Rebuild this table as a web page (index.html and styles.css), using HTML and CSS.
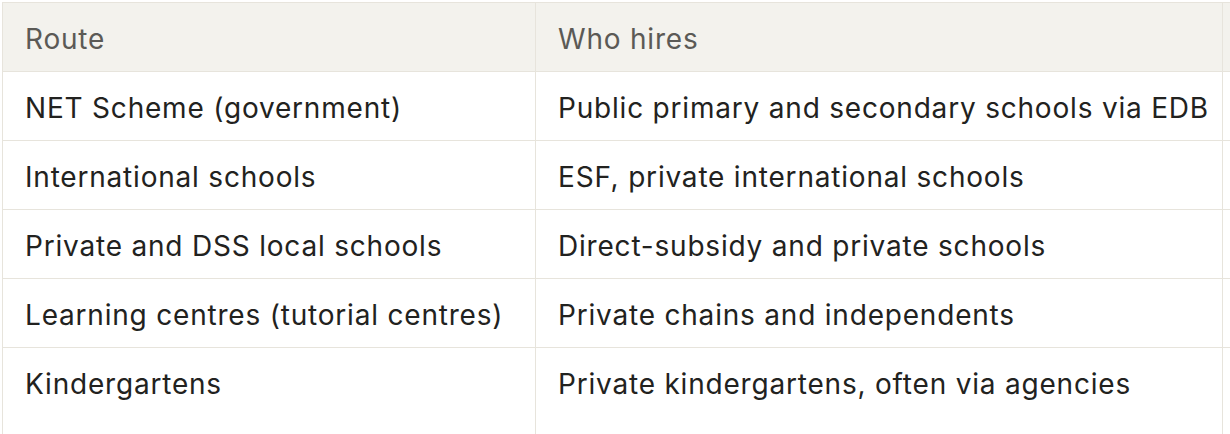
FILE: index.html
```html
<!DOCTYPE html>
<html lang="en">
<head>
<meta charset="utf-8">
<title>Routes</title>
<link rel="stylesheet" href="styles.css">
</head>
<body>
<div class="wrap">
  <table class="routes">
    <colgroup>
      <col class="k1">
      <col class="k2">
      <col class="k3">
    </colgroup>
    <thead>
      <tr><th>Route</th><th>Who hires</th><th></th></tr>
    </thead>
    <tbody>
      <tr><td>NET Scheme (government)</td><td>Public primary and secondary schools via EDB</td><td></td></tr>
      <tr><td>International schools</td><td>ESF, private international schools</td><td></td></tr>
      <tr><td>Private and DSS local schools</td><td>Direct-subsidy and private schools</td><td></td></tr>
      <tr><td>Learning centres (tutorial centres)</td><td>Private chains and independents</td><td></td></tr>
      <tr class="last"><td>Kindergartens</td><td>Private kindergartens, often via agencies</td><td></td></tr>
    </tbody>
  </table>
</div>
</body>
</html>
```
FILE: styles.css
```css
html, body {
  margin: 0;
  padding: 0;
  background: #ffffff;
}
.wrap {
  width: 1230px;
  height: 434px;
  overflow: hidden;
  padding: 2px 0 0 2px;
  box-sizing: border-box;
}
.routes {
  border-collapse: collapse;
  table-layout: fixed;
  width: 1620px;
  font-family: "Inter", "Liberation Sans", sans-serif;
  font-size: 28px;
  letter-spacing: 0.8px;
  color: #222220;
}
.k1 { width: 533px; }
.k2 { width: 687px; }
.k3 { width: 400px; }
.routes th, .routes td {
  border: 1.5px solid #e7e4dc;
  padding: 22px 22px 18px;
  line-height: 28px;
  text-align: left;
  vertical-align: top;
  white-space: nowrap;
  font-weight: 400;
}
.routes th {
  background: #f3f2ed;
  color: #5b5a56;
}
.routes .last td {
  padding-bottom: 60px;
}
```
